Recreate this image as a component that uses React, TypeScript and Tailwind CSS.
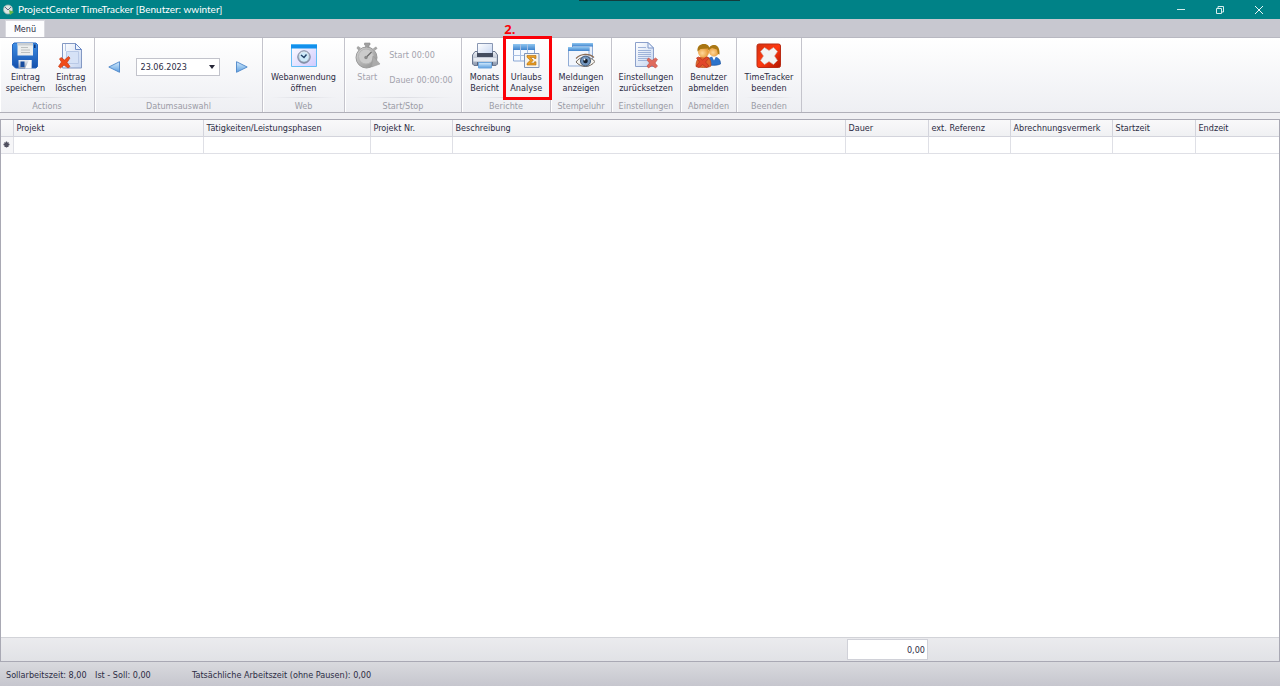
import type { ReactNode } from 'react';

function GradientDefs() {
  return (
    <svg className="absolute size-0" aria-hidden="true">
      <defs>
        <linearGradient id="blue" x1="0" y1="0" x2="0" y2="1">
          <stop offset="0" stopColor="#3f8fe6" />
          <stop offset="1" stopColor="#1450ac" />
        </linearGradient>
        <linearGradient id="sky" x1="0" y1="0" x2="0" y2="1">
          <stop offset="0" stopColor="#d5ecfd" />
          <stop offset="1" stopColor="#5d9fe0" />
        </linearGradient>
        <linearGradient id="skyHeader" x1="0" y1="0" x2="0" y2="1">
          <stop offset="0" stopColor="#8fc6f0" />
          <stop offset="1" stopColor="#3f83cd" />
        </linearGradient>
        <linearGradient id="paper" x1="0" y1="0" x2="1" y2="1">
          <stop offset="0" stopColor="#ffffff" />
          <stop offset="1" stopColor="#c4d4f0" />
        </linearGradient>
        <linearGradient id="windowFill" x1="0" y1="0" x2="1" y2="1">
          <stop offset="0" stopColor="#ffffff" />
          <stop offset="1" stopColor="#cfcaff" />
        </linearGradient>
        <linearGradient id="grey" x1="0" y1="0" x2="1" y2="1">
          <stop offset="0" stopColor="#d6d6d6" />
          <stop offset="1" stopColor="#8e8e8e" />
        </linearGradient>
        <linearGradient id="metal" x1="0" y1="0" x2="0" y2="1">
          <stop offset="0" stopColor="#eef1f6" />
          <stop offset="1" stopColor="#8b97ad" />
        </linearGradient>
        <linearGradient id="red" x1="0" y1="0" x2="1" y2="1">
          <stop offset="0" stopColor="#d5310f" />
          <stop offset="0.5" stopColor="#ff3a12" />
          <stop offset="1" stopColor="#b01500" />
        </linearGradient>
        <radialGradient id="head" cx="0.4" cy="0.6" r="0.7">
          <stop offset="0" stopColor="#ffd79a" />
          <stop offset="1" stopColor="#e08a1c" />
        </radialGradient>
      </defs>
    </svg>
  );
}

function Icon({ children }: { children: ReactNode }) {
  return (
    <svg className="size-7 shrink-0" viewBox="0 0 28 28" fill="none" aria-hidden="true">
      {children}
    </svg>
  );
}

const SaveIcon = () => (
  <Icon>
    <path d="M3 1h22l1.500 1.500v22L25 26H4.500L1.500 23V2.500z" fill="url(#blue)" stroke="#2565bd" />
    <path d="M6.500 1h15.500v12.500H6.500z" fill="#eceeed" />
    <path d="M6.500 1h15.500v2.500H6.500z" fill="#c9ced2" />
    <path d="M10 5.500h7M10 8h9M10 10.500h9" stroke="#bcc0c0" />
    <path d="M23.800 2.500v3.500" stroke="#0b2f72" strokeWidth="1.500" />
    <path d="M7.500 18h13v8.500h-13z" fill="url(#metal)" />
    <path d="M9.500 19.500h4v5.500h-4z" fill="#174c9f" />
    <path d="M14 26.500l4-8.500h2.500v8.500z" fill="#f9fafb" />
  </Icon>
);

const DeleteIcon = () => (
  <Icon>
    <path d="M5.500 1.500h13l6 6v18.500h-19z" fill="url(#paper)" stroke="#8398c3" />
    <path d="M18.500 1.500v6h6z" fill="#edf4ff" stroke="#6c8ac5" />
    <path d="M9.500 9.500h12v12h-12z" fill="#d6e2f6" stroke="#b9c9e6" />
    <path d="M8.500 2v7" stroke="#b9c9e6" />
    <path d="M4 15.500l3.500 2.500 4-3.500 1.500 1.500-3 4.500 3 4-2 1.500-4-3-3.500 3-2-1.500 3-4.500-2-3z" fill="#f04b1a" stroke="#c53a12" strokeWidth="0.700" />
  </Icon>
);

const WebIcon = () => (
  <Icon>
    <path d="M1.500 2.500h25v22h-25z" fill="url(#windowFill)" stroke="#65bdf5" />
    <path d="M1 2h26v4.500H1z" fill="#1290ec" />
    <path d="M1 2h26v1H1z" fill="#52b5f5" />
    <circle cx="14" cy="15" r="6.200" fill="url(#metal)" stroke="#75849d" />
    <circle cx="14" cy="15" r="4.700" fill="#cdeafa" />
    <path d="M11 13l3 2.500 2.500-3" stroke="#234166" strokeWidth="1.400" />
  </Icon>
);

const StopwatchIcon = () => (
  <Icon>
    <path d="M11.500 1h5.500v2h-1v3h-3.500V3h-1z" fill="#a0a0a0" stroke="#8d8d8d" strokeWidth="0.600" />
    <path d="M5 4l3 2-2.500 2.500L3.500 6zM23 4.500l-3 2 2 2 2.500-2z" fill="#a6a6a6" />
    <circle cx="13.500" cy="15.500" r="10.500" fill="url(#grey)" stroke="#999999" />
    <circle cx="13" cy="14.500" r="7.500" fill="#cbcbcb" stroke="#b5b5b5" />
    <path d="M12.500 16l6-6" stroke="#6b6b6b" strokeWidth="1.300" />
    <circle cx="13" cy="15.500" r="1.700" fill="#8a8a8a" />
    <path d="M20 14l7 8-8.500 3z" fill="#ababab" stroke="#9b9b9b" strokeWidth="0.600" />
  </Icon>
);

const PrinterIcon = () => (
  <Icon>
    <path d="M6.500 13V1.500h15V13z" fill="url(#paper)" stroke="#8997b3" />
    <path d="M1.500 13L4 9.500h2.500V14h15V9.500H24l2.500 3.500v9L25 23.500H3L1.500 22z" fill="url(#metal)" stroke="#6c7890" />
    <path d="M6 11h16v4H6z" fill="#444d60" />
    <path d="M2.500 16h23v3.500h-23z" fill="#e6eaf1" />
    <path d="M6 20h16v3H6z" fill="#59647b" />
    <path d="M7.500 20.500h13V26h-13z" fill="url(#sky)" stroke="#6da6dd" />
  </Icon>
);

const AnalysisIcon = () => (
  <Icon>
    <path d="M1.500 2.500h21V19h-21z" fill="#f6faff" stroke="#8aa7d5" />
    <path d="M1 2h22v6H1z" fill="url(#skyHeader)" />
    <path d="M8.500 2v17M15.500 2v17M1 13.500h22" stroke="#a9c0e3" />
    <path d="M12.500 11.500H27V25.500H12.500z" fill="#f8f4ea" stroke="#7e95ba" />
    <path d="M15 13.500h9v3h-1.500v-1h-4l2.800 2.800-2.800 2.700h4v-1.200H24V23h-9v-1.500l3.300-3.200L15 15.200z" fill="#eea020" stroke="#a86811" strokeWidth="0.600" />
  </Icon>
);

const EyeIcon = () => (
  <Icon>
    <path d="M5.500 1.500h20V18h-20z" fill="#e6eefb" stroke="#91acd5" />
    <path d="M5 1h21v3.500H5z" fill="url(#skyHeader)" />
    <path d="M1.500 5.500h20.500V24H1.500z" fill="#f2f6fd" stroke="#91acd5" />
    <path d="M1 5h21.500v4H1z" fill="url(#skyHeader)" />
    <path d="M9 20C13 14 22 13 28 19.500 23 26 14 26 9 20z" fill="#f4f2ed" stroke="#74695f" />
    <circle cx="18.500" cy="19" r="5" fill="#7194bd" stroke="#425a78" />
    <circle cx="18.500" cy="19" r="2.300" fill="#16202e" />
    <path d="M9 16.500C14 11.500 22 11 27 15.500" stroke="#8a6c55" strokeWidth="1.200" />
    <circle cx="17.500" cy="17.500" r="0.900" fill="#ffffff" />
  </Icon>
);

const ResetIcon = () => (
  <Icon>
    <path d="M3.500 .500H16l5.500 5.500v18.500h-18z" fill="url(#paper)" stroke="#8ca0cb" />
    <path d="M16 .500V6h5.500z" fill="#eff4ff" stroke="#7f98c8" />
    <path d="M6 5.500h8M6 8.500h13M6 10.500h13M6 12.500h13M6 14.500h13M6 16.500h11M6 18.500h9" stroke="#9fb3d9" />
    <path d="M16.500 16l3.500 2.500 3.500-2.500 2 1.500-2.500 3.500 2.500 3-2 2-3.500-2.500-3.500 2.500-1.500-2 2.500-3-2.500-3z" fill="#df6a5d" stroke="#c2493d" strokeWidth="0.600" />
  </Icon>
);

const UsersIcon = () => (
  <Icon>
    <path d="M13 22c0-5 2.500-7 6.500-7s7 2 7 7c-3 1.500-10 2-13.500 0z" fill="#2b72cb" stroke="#17529f" strokeWidth="0.700" />
    <path d="M18 14.500l2 4 2-4z" fill="#ffffff" />
    <circle cx="20" cy="9.500" r="5" fill="url(#head)" />
    <path d="M14.500 8c0-3.500 3-5 5.500-5s6 1.500 5.500 9.500l-1.500-.5-1-4.500-5-1.500z" fill="#aa7815" />
    <path d="M2 24c0-7 3-9.500 8-9.500s7 2.500 7 9.500c-3 2-11.500 2-15 0z" fill="#e0662c" stroke="#b84a1c" strokeWidth="0.700" />
    <circle cx="9.500" cy="10" r="5.500" fill="url(#head)" />
    <path d="M3.500 9.500C3 4 6 2 10 2s6 2.500 5.500 7l-2-2.500-7 .5z" fill="#a87512" />
    <path d="M2.500 16l2-1 4 3 4-3 2.500 1-3.500 4 3.500 4-2.500 1.500-4-3-3.500 3-3-1 3.500-4.500z" fill="#e2472a" stroke="#b3341c" strokeWidth="0.700" />
  </Icon>
);

const ExitIcon = () => (
  <Icon>
    <rect x="2" y="2" width="23.500" height="23.500" rx="2" fill="url(#red)" stroke="#b92c16" />
    <path d="M9.500 5.500l4.500 3 4.500-3 4 4-3 4.500 3 4.500-4 4-4.500-3-4.500 3-4-4 3-4.500-3-4.500z" fill="#f3f4f4" stroke="#c9a9a2" strokeWidth="0.600" />
  </Icon>
);

function RibbonButton({ icon, lines, disabled }: { icon: ReactNode; lines: string[]; disabled?: boolean }) {
  return (
    <button
      type="button"
      disabled={disabled}
      className="flex flex-col items-center gap-0.5 leading-[11px] whitespace-nowrap disabled:text-[#a3a3ad]"
    >
      {icon}
      <span className="flex flex-col items-center">
        {lines.map((line) => (
          <span key={line}>{line}</span>
        ))}
      </span>
    </button>
  );
}

function RibbonGroup({ label, width, children }: { label: string; width: string; children: ReactNode }) {
  return (
    <section
      aria-label={label}
      className={`flex shrink-0 flex-col border-r border-[#c4c4cc] shadow-[inset_1px_0_0_#ffffff] ${width}`}
    >
      <div className="flex flex-1 items-start justify-center pt-1">{children}</div>
      <div className="mx-2 h-px bg-linear-to-r from-transparent via-[#dcdde3] to-transparent" />
      <div className="h-[14px] text-center leading-[16px] text-[#9b9ca6]">{label}</div>
    </section>
  );
}

const columns = [
  { title: 'Projekt', width: 'w-[190px]' },
  { title: 'Tätigkeiten/Leistungsphasen', width: 'w-[167px]' },
  { title: 'Projekt Nr.', width: 'w-[82px]' },
  { title: 'Beschreibung', width: '' },
  { title: 'Dauer', width: 'w-[83px]' },
  { title: 'ext. Referenz', width: 'w-[82px]' },
  { title: 'Abrechnungsvermerk', width: 'w-[102px]' },
  { title: 'Startzeit', width: 'w-[83px]' },
  { title: 'Endzeit', width: 'w-[84px]' },
];

export default function App() {
  return (
    <div className="flex min-h-screen flex-col bg-[#f0f0f3] font-['DejaVu_Sans_Condensed','DejaVu_Sans',sans-serif] text-[9px] text-[#2c2c44]">
      <GradientDefs />
      <header className="relative flex h-[19px] items-center bg-[#008287] pl-[3px] text-white">
        <div className="absolute top-0 left-[579px] h-px w-[161px] bg-[#123c3d]" />
        <svg className="size-[11px]" viewBox="0 0 11 11" aria-hidden="true">
          <circle cx="5" cy="5.500" r="4.500" fill="#dce6e3" stroke="#9fb3b0" strokeWidth="0.800" />
          <path d="M2 3l3 3 3-3" stroke="#555577" strokeWidth="0.900" fill="none" />
          <path d="M6 6l5 2-4 3z" fill="#65b847" />
        </svg>
        <h1 className="ml-1 flex-1 font-['Lato',sans-serif] text-[10px] leading-[19px]">
          ProjectCenter TimeTracker [Benutzer: wwinter]
        </h1>
        <div className="flex items-center gap-[29px] pr-4">
          <button type="button" aria-label="Minimieren">
            <svg className="size-[10px]" viewBox="0 0 10 10" fill="none" stroke="#d5ecec">
              <path d="M1 4.500h8" />
            </svg>
          </button>
          <button type="button" aria-label="Verkleinern">
            <svg className="size-[10px]" viewBox="0 0 10 10" fill="none" stroke="#d5ecec">
              <path d="M1.500 3.500h5v5h-5zM3 3V1.500h5.500V7H7" />
            </svg>
          </button>
          <button type="button" aria-label="Schließen">
            <svg className="size-[10px]" viewBox="0 0 10 10" fill="none" stroke="#e8f6f6">
              <path d="M1 1l8 8M9 1L1 9" />
            </svg>
          </button>
        </div>
      </header>

      <nav className="flex h-[18px] items-end bg-[#c8c8d0] pl-[5px]">
        <button type="button" className="h-[17px] w-10 border border-b-0 border-[#d8d8de] bg-[#fdfdfe] leading-[16px]">
          Menü
        </button>
      </nav>

      <div className="flex h-[76px] border-y border-t-[#b8b8c1] border-b-[#b0b0b9] bg-linear-to-b from-white to-[#eeeff3]">
        <RibbonGroup label="Actions" width="w-[95px]">
          <div className="flex gap-[10px] pr-0.5">
            <RibbonButton icon={<SaveIcon />} lines={['Eintrag', 'speichern']} />
            <RibbonButton icon={<DeleteIcon />} lines={['Eintrag', 'löschen']} />
          </div>
        </RibbonGroup>

        <RibbonGroup label="Datumsauswahl" width="w-[168px]">
          <div className="flex items-center gap-4 pt-4 pr-0.5">
            <button type="button" aria-label="Vorheriger Tag">
              <svg className="size-3" viewBox="0 0 12 12">
                <path d="M11.500 .700v10.600L.800 6z" fill="url(#sky)" stroke="#4c86c8" strokeWidth="0.900" />
              </svg>
            </button>
            <div className="flex h-[18px] w-[84px] items-center border border-[#c2c3cb] bg-white">
              <input
                aria-label="Datum"
                defaultValue="23.06.2023"
                className="w-full min-w-0 bg-transparent pt-0.5 pl-1 outline-none"
              />
              <button type="button" aria-label="Kalender öffnen" className="px-1">
                <svg className="h-1 w-[6px]" viewBox="0 0 6 4">
                  <path d="M0 0h6L3 4z" fill="#252536" />
                </svg>
              </button>
            </div>
            <button type="button" aria-label="Nächster Tag">
              <svg className="size-3" viewBox="0 0 12 12">
                <path d="M.500 .700v10.600L11.200 6z" fill="url(#sky)" stroke="#4c86c8" strokeWidth="0.900" />
              </svg>
            </button>
          </div>
        </RibbonGroup>

        <RibbonGroup label="Web" width="w-[82px]">
          <RibbonButton icon={<WebIcon />} lines={['Webanwendung', 'öffnen']} />
        </RibbonGroup>

        <RibbonGroup label="Start/Stop" width="w-[117px]">
          <div className="flex gap-2">
            <RibbonButton icon={<StopwatchIcon />} lines={['Start']} disabled />
            <div className="flex flex-col gap-[13px] pt-[7px] leading-[12px] whitespace-nowrap text-[#a3a3ad]">
              <span>Start 00:00</span>
              <span>Dauer 00:00:00</span>
            </div>
          </div>
        </RibbonGroup>

        <RibbonGroup label="Berichte" width="w-[89px]">
          <div className="flex gap-[11px]">
            <RibbonButton icon={<PrinterIcon />} lines={['Monats', 'Bericht']} />
            <div className="relative">
              <RibbonButton icon={<AnalysisIcon />} lines={['Urlaubs', 'Analyse']} />
              <div className="pointer-events-none absolute -top-[6px] -left-[7px] h-16 w-[49px] border-3 border-[#fb0007]" />
              <span className="absolute -top-[20px] -left-[6px] font-['Open_Sans',sans-serif] text-[13px] leading-[14px] font-bold text-[#fb0007]">
                2.
              </span>
            </div>
          </div>
        </RibbonGroup>

        <RibbonGroup label="Stempeluhr" width="w-[61px]">
          <RibbonButton icon={<EyeIcon />} lines={['Meldungen', 'anzeigen']} />
        </RibbonGroup>
        <RibbonGroup label="Einstellungen" width="w-[69px]">
          <RibbonButton icon={<ResetIcon />} lines={['Einstellungen', 'zurücksetzen']} />
        </RibbonGroup>
        <RibbonGroup label="Abmelden" width="w-[56px]">
          <RibbonButton icon={<UsersIcon />} lines={['Benutzer', 'abmelden']} />
        </RibbonGroup>
        <RibbonGroup label="Beenden" width="w-[65px]">
          <RibbonButton icon={<ExitIcon />} lines={['TimeTracker', 'beenden']} />
        </RibbonGroup>
      </div>

      <main className="mt-[6px] flex flex-1 flex-col border border-[#a9a9b4] bg-white">
        <table className="w-full table-fixed border-collapse">
          <thead>
            <tr className="h-4 bg-linear-to-b from-[#f9f9fa] to-[#f0f1f3]">
              <th className="w-[12px] border-r border-b border-[#d3d4dc] p-0" aria-label="Zeilenstatus" />
              {columns.map((column) => (
                <th
                  key={column.title}
                  className={`border-r border-b border-[#d3d4dc] p-0 pl-[3px] text-left leading-[14px] font-normal whitespace-nowrap last:border-r-0 ${column.width}`}
                >
                  {column.title}
                </th>
              ))}
            </tr>
          </thead>
          <tbody>
            <tr className="h-[17px]">
              <td className="border-r border-b border-[#dfe0e6] bg-[#f6f6f8] p-0">
                <svg className="mx-auto size-[7px]" viewBox="0 0 7 7" stroke="#50505f" strokeWidth="1.300">
                  <path d="M3.500 .500v6M.500 3.500h6M1.500 1.500l4 4M5.500 1.500l-4 4" />
                </svg>
              </td>
              {columns.map((column) => (
                <td key={column.title} className="border-r border-b border-[#dfe0e6] p-0 last:border-r-0" />
              ))}
            </tr>
          </tbody>
        </table>
        <div className="flex-1" />
        <div className="flex h-6 items-center justify-end border-t border-[#d2d3d8] bg-linear-to-b from-[#ebebee] to-[#e1e2e6] pr-[351px]">
          <output
            aria-label="Summe Dauer"
            className="h-[21px] w-[81px] border border-[#d0d1d8] bg-white pr-[2px] text-right leading-[20px]"
          >
            0,00
          </output>
        </div>
      </main>

      <footer className="flex h-6 items-center bg-linear-to-b from-[#d9dade] to-[#c6c6ce] pt-[3px] pl-[6px] whitespace-nowrap">
        <span className="w-[89px]">Sollarbeitszeit: 8,00</span>
        <span className="w-[97px]">Ist - Soll: 0,00</span>
        <span>Tatsächliche Arbeitszeit (ohne Pausen): 0,00</span>
      </footer>
    </div>
  );
}
